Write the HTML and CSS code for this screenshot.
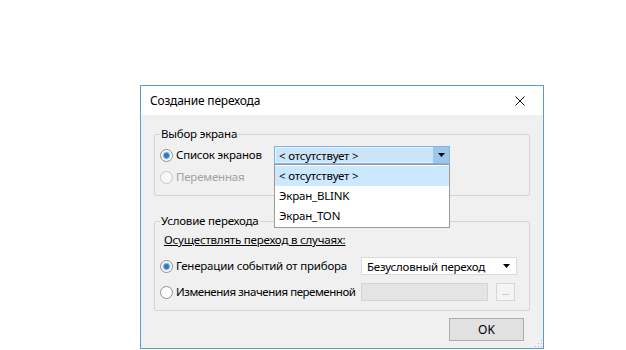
FILE: index.html
```html
<!DOCTYPE html>
<html lang="ru">
<head>
    <meta charset="UTF-8">
    <title>Создание перехода</title>
    <link rel="stylesheet" href="styles.css">
</head>
<body>
    <div class="dialog">
        <div class="titlebar">
            <span class="title">Создание перехода</span>
            <button class="close" type="button" aria-label="Закрыть">
                <svg width="10" height="10" viewBox="0 0 10 10"><path d="M0.5 0.5L9.5 9.5M9.5 0.5L0.5 9.5" stroke="#111" stroke-width="1" fill="none"/></svg>
            </button>
        </div>

        <div class="client">
            <fieldset class="group">
                <legend>Выбор экрана</legend>
                <div class="row">
                    <label class="choice short"><span class="radio checked"></span>Список экранов</label>
                    <div class="combo open">
                        <span class="combo-text">&lt; отсутствует &gt;</span>
                        <span class="combo-btn">
                            <svg width="7" height="4" viewBox="0 0 7 4"><path d="M0 0H7L3.5 4Z" fill="#000"/></svg>
                        </span>
                        <ul class="dropdown">
                            <li class="selected">&lt; отсутствует &gt;</li>
                            <li>Экран_BLINK</li>
                            <li>Экран_TON</li>
                        </ul>
                    </div>
                </div>
                <div class="row">
                    <label class="choice short disabled"><span class="radio"></span>Переменная</label>
                </div>
            </fieldset>

            <fieldset class="group second">
                <legend>Условие перехода</legend>
                <p class="hint">Осуществлять переход в случаях:</p>
                <div class="row first">
                    <label class="choice"><span class="radio checked"></span>Генерации событий от прибора</label>
                    <div class="select">
                        <span>Безусловный переход</span>
                        <svg width="7" height="4" viewBox="0 0 7 4"><path d="M0 0H7L3.5 4Z" fill="#000"/></svg>
                    </div>
                </div>
                <div class="row">
                    <label class="choice long"><span class="radio"></span>Изменения значения переменной</label>
                    <div class="field-disabled"></div>
                    <button class="browse" type="button" disabled>...</button>
                </div>
            </fieldset>

            <div class="footer">
                <button class="ok" type="button">OK</button>
                <span class="grip">
                    <svg width="10" height="10" viewBox="0 0 10 10" fill="#b8b8b8">
                        <rect x="8" y="2" width="1" height="1"/>
                        <rect x="5" y="5" width="1" height="1"/><rect x="8" y="5" width="1" height="1"/>
                        <rect x="2" y="8" width="1" height="1"/><rect x="5" y="8" width="1" height="1"/><rect x="8" y="8" width="1" height="1"/>
                    </svg>
                </span>
            </div>
        </div>
    </div>
</body>
</html>
```

FILE: styles.css
```css
* { box-sizing: border-box; }
body {
    margin: 0;
    background: #fff;
    font-family: 'Noto Sans', 'Liberation Sans', sans-serif;
    font-size: 11.5px;
    letter-spacing: -0.2px;
    color: #000;
}
.dialog {
    width: 404px;
    height: 264px;
    margin: 85px 0 0 140px;
    border: 1px solid #5b9bd5;
    display: flex;
    flex-direction: column;
    background: #f0f0f0;
}
.titlebar {
    height: 29px;
    background: #fff;
    display: flex;
    align-items: center;
    padding-left: 9px;
}
.title {
    flex: 1;
    line-height: 14px;
    font-size: 12px;
}
.close {
    width: 46px;
    height: 29px;
    padding: 0;
    border: none;
    background: transparent;
    display: flex;
    align-items: center;
    justify-content: center;
}
.client {
    flex: 1;
    display: flex;
    flex-direction: column;
}
.group {
    margin: 12px 13px 0;
    padding: 0 8px 9px 5px;
    border: 1px solid #d5d5d5;
    border-radius: 2px;
    min-width: 0;
}
.group legend {
    padding: 0 1px;
    line-height: 14px;
}
.group.second {
    margin-top: 18px;
}
.row {
    display: flex;
    align-items: center;
    height: 18px;
    margin-top: 4px;
}
.row:first-of-type {
    margin-top: 5px;
}
.second .row {
    margin-top: 8px;
}
.second .row.first {
    margin-top: 10px;
}
.choice {
    display: flex;
    align-items: center;
    width: 201px;
    line-height: 14px;
    white-space: nowrap;
}
.choice.short {
    width: 114px;
}
.choice.long {
    letter-spacing: -0.45px;
}
.choice.disabled {
    color: #a3a3a3;
}
.radio {
    flex: none;
    width: 13px;
    height: 13px;
    margin-right: 3px;
    border: 1px solid #8f8f8f;
    border-radius: 50%;
    background: #fff;
}
.radio.checked {
    background: radial-gradient(circle, #2f78bf 0 2px, #7db2e2 3px, #e8f2fb 4px, #fff 5px);
}
.disabled .radio {
    border-color: #c6c6c6;
    background: #f7f7f7;
}
.hint {
    margin: 5px 0 0 4px;
    line-height: 14px;
    text-decoration: underline;
}
.combo {
    position: relative;
    display: flex;
    width: 176px;
    height: 18px;
    border: 1px solid #7eb4ea;
    background: #cce4f7;
}
.combo-text {
    flex: 1;
    padding-left: 3px;
    line-height: 16px;
    border: 1px solid #e5f1fb;
    border-right: none;
}
.combo-btn {
    width: 16px;
    display: flex;
    align-items: center;
    justify-content: center;
    background: #9cc6ea;
}
.dropdown {
    position: absolute;
    top: 17px;
    left: -1px;
    width: 176px;
    margin: 0;
    padding: 1px 0;
    list-style: none;
    border: 1px solid #9a9a9a;
    background: #fff;
}
.dropdown li {
    height: 20px;
    line-height: 20px;
    padding-left: 4px;
}
.dropdown li.selected {
    background: #cce8ff;
}
.select {
    width: 156px;
    height: 18px;
    display: flex;
    align-items: center;
    justify-content: space-between;
    padding: 0 6px 0 5px;
    border: 1px solid #dadada;
    background: #fff;
}
.field-disabled {
    width: 127px;
    height: 18px;
    border: 1px solid #d4d4d4;
    background: #e4e4e4;
}
.browse {
    width: 19px;
    height: 18px;
    margin-left: 8px;
    padding: 0;
    border: 1px solid #d6d6d6;
    background: #f4f4f4;
    color: #a8a8a8;
    font-family: inherit;
    font-size: 9px;
    line-height: 12px;
}
.footer {
    flex: 1;
    display: flex;
    justify-content: flex-end;
    align-items: flex-start;
    padding-top: 7px;
}
.ok {
    width: 75px;
    height: 23px;
    padding: 0;
    border: 1px solid #adadad;
    background: #e1e1e1;
    font-family: inherit;
    font-size: 12px;
    color: #000;
}
.grip {
    align-self: flex-end;
    width: 19px;
    display: flex;
    justify-content: flex-end;
}
```
